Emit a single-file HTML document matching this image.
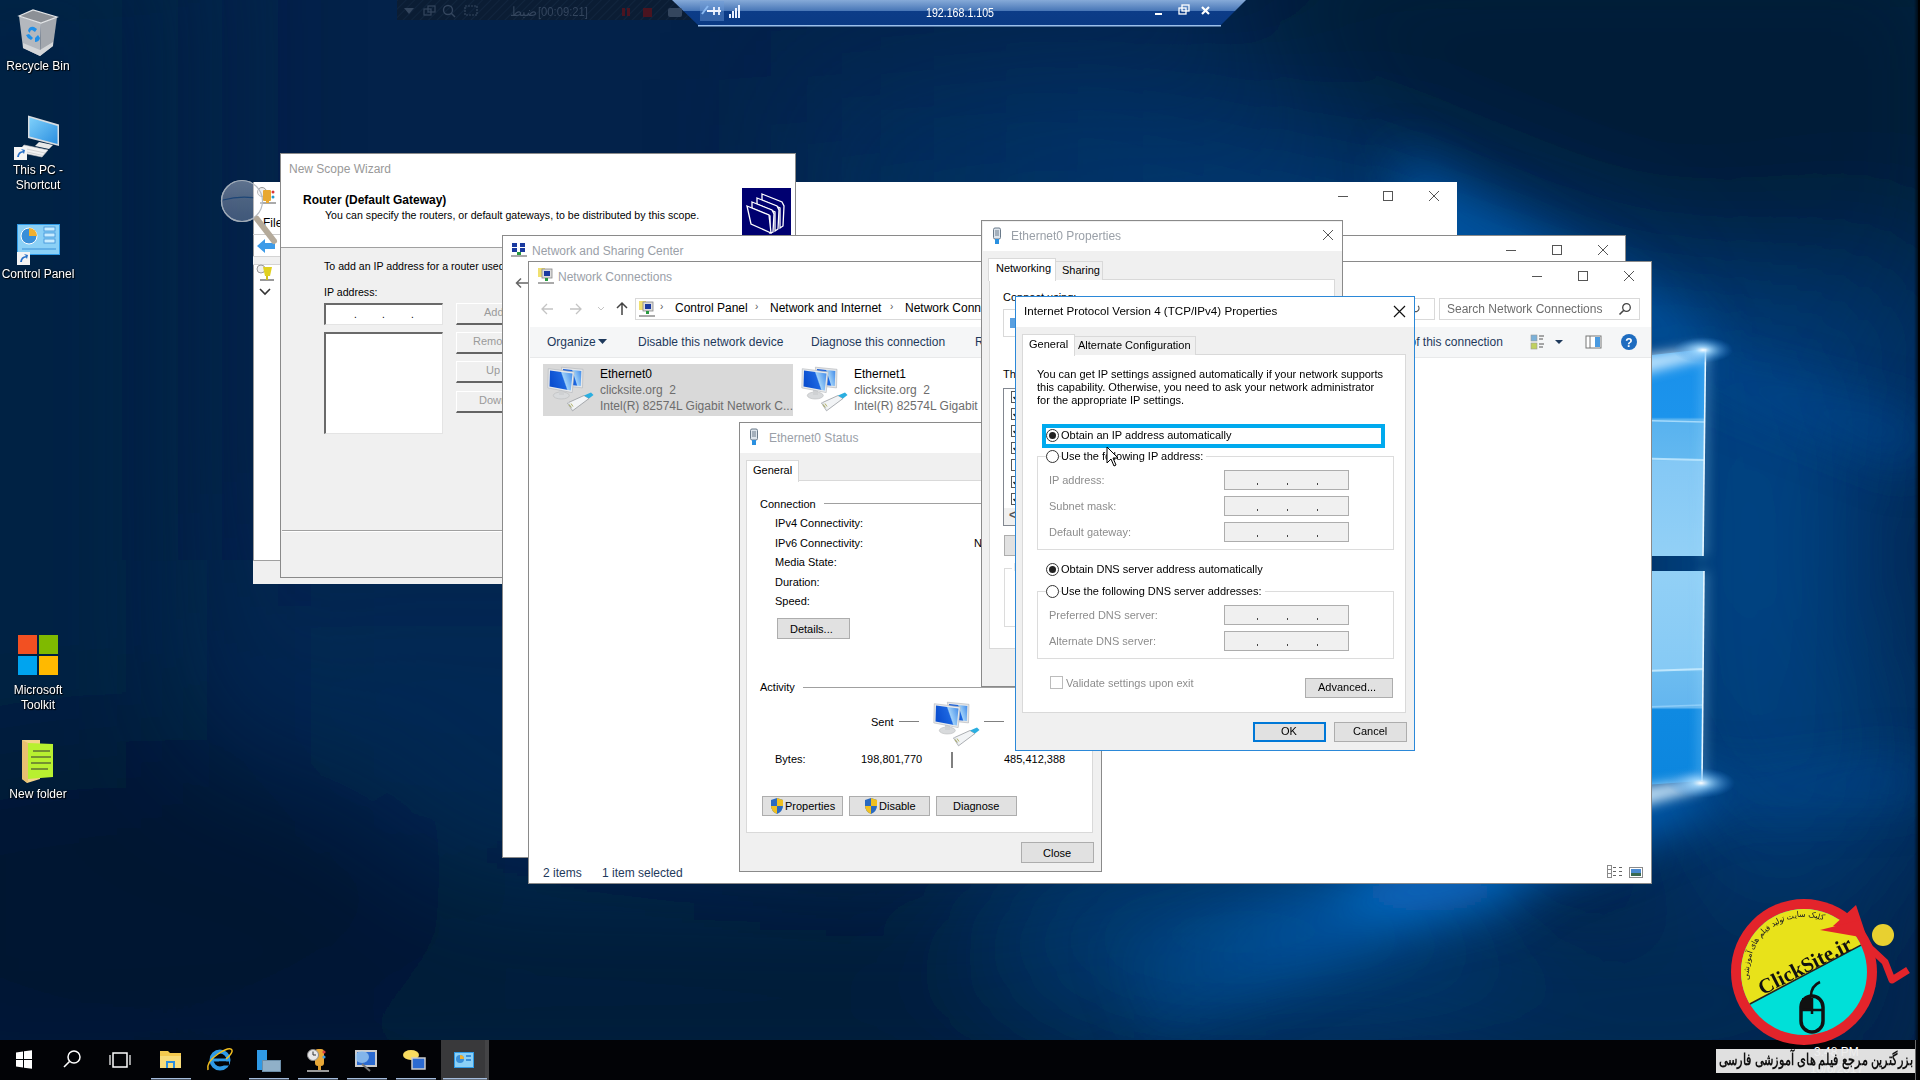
<!DOCTYPE html>
<html><head><meta charset="utf-8">
<style>
*{box-sizing:border-box;margin:0;padding:0}
html,body{width:1920px;height:1080px;overflow:hidden}
body{position:relative;font-family:"Liberation Sans",sans-serif;font-size:12px;color:#000;background:#082448}
.a{position:absolute}
.t{position:absolute;white-space:nowrap;line-height:1}
#wall{position:absolute;left:0;top:0;width:1920px;height:1040px;
background:
 radial-gradient(ellipse 260px 500px at 1740px 560px, rgba(14,100,190,.55), rgba(14,100,190,0) 70%),
 linear-gradient(90deg,#0a2447 0%,#0a2a52 40%,#0b3a72 75%,#0a4a8e 88%,#083f7c 100%);}
.lbl{position:absolute;color:#fff;font-size:12px;text-align:center;line-height:15px;text-shadow:0 0 2px #000,1px 1px 1px #000;width:76px}
.win{position:absolute;background:#fff;border:1px solid #7a7a7a}
.gray{background:#f0f0f0}
.tb-ctl{position:absolute;width:10px;height:10px}
.btn{position:absolute;background:#e1e1e1;border:1px solid #adadad;text-align:center;font-size:11px;line-height:20px}
.dis{color:#8a8a8a}
.ipb{left:1224px;width:125px;height:20px;background:#f0f0f0;border:1px solid #adadad}
.ipb::before{content:"";position:absolute;left:32px;top:12px;width:1px;height:2px;background:#444;box-shadow:30px 0 #444,60px 0 #444}
</style></head><body>
<svg class="a" style="left:0;top:0" width="1920" height="1040" viewBox="0 0 1920 1040">
 <defs>
  <filter id="b1" x="-50%" y="-50%" width="200%" height="200%"><feGaussianBlur stdDeviation="70"/></filter>
  <filter id="b2" x="-50%" y="-50%" width="200%" height="200%"><feGaussianBlur stdDeviation="25"/></filter>
  <filter id="b3" x="-50%" y="-50%" width="200%" height="200%"><feGaussianBlur stdDeviation="6"/></filter>
  <linearGradient id="pane1" gradientUnits="userSpaceOnUse" x1="0" y1="349" x2="0" y2="556">
   <stop offset="0" stop-color="#1990ea"/><stop offset="0.33" stop-color="#1c94ec"/>
   <stop offset="0.34" stop-color="#58b2ef"/><stop offset="0.53" stop-color="#62b8f0"/>
   <stop offset="0.54" stop-color="#84c8f5"/><stop offset="1" stop-color="#92d0f6"/>
  </linearGradient>
  <linearGradient id="pane2" gradientUnits="userSpaceOnUse" x1="0" y1="571" x2="0" y2="781">
   <stop offset="0" stop-color="#92d0f6"/><stop offset="0.47" stop-color="#86caf5"/>
   <stop offset="0.48" stop-color="#6cbcf0"/><stop offset="0.65" stop-color="#64b6ef"/>
   <stop offset="0.66" stop-color="#0f8ae2"/><stop offset="1" stop-color="#0c86de"/>
  </linearGradient>
  <linearGradient id="beamA" gradientUnits="userSpaceOnUse" x1="800" y1="0" x2="1706" y2="0"><stop offset="0" stop-color="#04386c" stop-opacity=".4"/><stop offset="1" stop-color="#0050a0" stop-opacity="1"/></linearGradient>
  <linearGradient id="beamB" gradientUnits="userSpaceOnUse" x1="1100" y1="0" x2="1600" y2="0"><stop offset="0" stop-color="#006ac8" stop-opacity=".05"/><stop offset="1" stop-color="#006ac8" stop-opacity="1"/></linearGradient>
  <radialGradient id="glow" cx="0.5" cy="0.5" r="0.5">
   <stop offset="0" stop-color="#ffffff" stop-opacity="1"/><stop offset="0.25" stop-color="#9fd8ff" stop-opacity=".8"/><stop offset="1" stop-color="#2a8ae0" stop-opacity="0"/>
  </radialGradient>
 </defs>
 <rect width="1920" height="1040" fill="#03224a"/>
 <g filter="url(#b1)">
  <rect x="-150" y="-100" width="350" height="1240" fill="#012044"/>
  <polygon points="260,560 760,560 760,830 260,850" fill="#053767" opacity=".35"/>
  <rect x="-100" y="870" width="1300" height="260" fill="#011b3b"/>
  <ellipse cx="120" cy="900" rx="320" ry="160" fill="#001530"/>
  <polygon points="800,80 1100,60 1706,330 1706,400 1300,340 800,300" fill="url(#beamA)"/>
  <ellipse cx="1750" cy="560" rx="120" ry="330" fill="#004486"/>
  <ellipse cx="1850" cy="760" rx="90" ry="140" fill="#003a72"/>
  <polygon points="1150,-100 2000,-100 2000,300 1706,290 1350,160" fill="#011a38"/>
  <ellipse cx="1870" cy="360" rx="110" ry="110" fill="#003a70" opacity=".8"/>
  <ellipse cx="1650" cy="1010" rx="260" ry="90" fill="#012a54"/>
  <ellipse cx="1250" cy="930" rx="260" ry="110" fill="#003c74"/>
 </g>
 <g filter="url(#b2)">
  <polygon points="1400,150 1706,330 1706,370 1400,250" fill="#0064bc" opacity=".65"/>
  <polygon points="1706,360 1920,420 1920,470 1706,385" fill="#0050a0" opacity=".5"/>
  <polygon points="1100,940 1702,770 1702,810 1150,1040" fill="url(#beamB)"/>
  <polygon points="1702,785 1920,760 1920,800 1702,805" fill="#0050a0" opacity=".5"/>
  <ellipse cx="1430" cy="892" rx="90" ry="22" fill="#0a78d8" opacity=".7"/>
 </g>
<polygon points="1500,372 1706,349 1703,556 1500,556" fill="url(#pane1)"/>
 <polygon points="1500,571 1704,571 1702,781 1500,795" fill="url(#pane2)"/>
 <line x1="1500" y1="417" x2="1704" y2="422" stroke="#b8e4ff" stroke-width="1.5" opacity=".8"/>
 <line x1="1500" y1="455" x2="1704" y2="460" stroke="#c8ecff" stroke-width="2" opacity=".8"/>
 <line x1="1500" y1="676" x2="1703" y2="669" stroke="#d0efff" stroke-width="2" opacity=".8"/>
 <line x1="1500" y1="712" x2="1703" y2="705" stroke="#a8dcff" stroke-width="1.5" opacity=".6"/>
 <g filter="url(#b3)">
  <polygon points="1600,362 1706,346 1706,358 1600,385" fill="#d8f0ff" opacity=".85"/>
  <polygon points="1600,793 1702,778 1702,790 1600,818" fill="#d8f0ff" opacity=".85"/>
  <line x1="1706" y1="349" x2="1703" y2="556" stroke="#9fdcff" stroke-width="4" opacity=".7"/>
  <line x1="1704" y1="571" x2="1702" y2="781" stroke="#9fdcff" stroke-width="4" opacity=".7"/>
 </g>
 <line x1="1705.5" y1="349" x2="1703" y2="556" stroke="#e6f6ff" stroke-width="1.6"/>
 <line x1="1704" y1="571" x2="1702" y2="781" stroke="#e6f6ff" stroke-width="1.6"/>
 <ellipse cx="1703" cy="350" rx="30" ry="13" fill="url(#glow)"/>
 <ellipse cx="1701" cy="783" rx="34" ry="15" fill="url(#glow)"/>
</svg>
<!-- desktop icons -->
<svg class="a" style="left:10px;top:5px" width="60" height="55" viewBox="0 0 60 55">
 <polygon points="9,11 31,18 30,51 13,43" fill="#b4b8be"/>
 <polygon points="31,18 47,12 43,41 30,51" fill="#a4a8ae"/>
 <polygon points="9,11 23,5 47,12 31,18" fill="#8c9096"/>
 <polygon points="13,38 30,45 43,37 43,41 30,51 13,43" fill="#d4d6d8"/>
 <path d="M9,11 L23,5 L47,12 L31,18Z" fill="none" stroke="#e4e6e8" stroke-width="1.2"/>
 <g fill="#1f8fe8">
  <path d="M18,26 Q19,21 24,22 L27,24 L25,27 L22,25 Q20,25 20,28Z"/>
  <path d="M19,29 L23,33 L21,35 Q17,33 16,30Z"/>
  <path d="M25,33 L28,30 L30,33 Q29,37 25,37Z"/>
 </g>
</svg>
<div class="lbl" style="left:0;top:59px">Recycle Bin</div>
<svg class="a" style="left:12px;top:114px" width="50" height="48" viewBox="0 0 50 48">
 <defs><linearGradient id="pcs" x1="0" y1="0" x2="1" y2="1"><stop offset="0" stop-color="#7fd0fb"/><stop offset="1" stop-color="#2b8fe0"/></linearGradient></defs>
 <polygon points="16,1.5 47,10.6 47,32 16,24" fill="#d8dce0"/>
 <polygon points="17.5,3.5 45.5,12 45.5,30 17.5,22.5" fill="url(#pcs)"/>
 <polygon points="27,28 41,31 37,35 23,32" fill="#e8e8e8"/>
 <polygon points="12,31 36,36 30,43 6,38" fill="#f2f2f2" stroke="#c8c8c8" stroke-width=".6"/>
 <path d="M10,34 L33,39 M8,36.5 L31,41.5" stroke="#c0c0c0" stroke-width=".6"/>
 <rect x="2" y="33" width="13" height="13" fill="#f4f4f4"/>
 <path d="M5,43 Q6,37 11,37 L9,35 L13,36 L12,40 L11,38.5 Q7,39 7,43Z" fill="#2770c8"/>
</svg>
<div class="lbl" style="left:0;top:163px">This PC -<br>Shortcut</div>
<svg class="a" style="left:14px;top:222px" width="48" height="44" viewBox="0 0 48 44">
 <rect x="3" y="2" width="43" height="31" fill="#2f9ae6"/>
 <rect x="4" y="3" width="41" height="29" fill="#8bd0f6"/>
 <circle cx="15" cy="14" r="8" fill="#3a8fd8" stroke="#fff" stroke-width="1"/>
 <path d="M15,14 L15,6 A8,8 0 0 1 23,14Z" fill="#f0b030"/>
 <rect x="30" y="5" width="11" height="4" fill="#c8ecff" stroke="#3a8fd8" stroke-width=".8"/>
 <rect x="30" y="11" width="11" height="4" fill="#c8ecff" stroke="#3a8fd8" stroke-width=".8"/>
 <rect x="30" y="17" width="11" height="4" fill="#c8ecff" stroke="#3a8fd8" stroke-width=".8"/>
 <line x1="8" y1="27" x2="42" y2="27" stroke="#3a8fd8" stroke-width="1.2"/>
 <rect x="3" y="30" width="13" height="13" fill="#f4f4f4"/>
 <path d="M6,40 Q7,34 12,34 L10,32 L14,33 L13,37 L12,35.5 Q8,36 8,40Z" fill="#2770c8"/>
</svg>
<div class="lbl" style="left:0;top:267px">Control Panel</div>
<svg class="a" style="left:17px;top:634px" width="42" height="42" viewBox="0 0 42 42">
 <rect x="1" y="1" width="19" height="19" fill="#f25022"/>
 <rect x="22" y="1" width="19" height="19" fill="#7fba00"/>
 <rect x="1" y="22" width="19" height="19" fill="#00a4ef"/>
 <rect x="22" y="22" width="19" height="19" fill="#ffb900"/>
</svg>
<div class="lbl" style="left:0;top:683px">Microsoft<br>Toolkit</div>
<svg class="a" style="left:20px;top:739px" width="36" height="44" viewBox="0 0 36 44">
 <polygon points="2,1 20,1 20,40 7,44 2,40" fill="#f3d48a"/>
 <polygon points="8,4 33,5 33,38 8,40" fill="#b8f030"/>
 <polygon points="2,1 8,4 8,44 2,40" fill="#e8c070"/>
 <line x1="13" y1="12" x2="30" y2="12" stroke="#333" stroke-width="1"/>
 <line x1="11" y1="18" x2="31" y2="18" stroke="#333" stroke-width="1"/>
 <line x1="11" y1="24" x2="31" y2="24" stroke="#333" stroke-width="1"/>
 <line x1="11" y1="30" x2="28" y2="30" stroke="#333" stroke-width="1"/>
</svg>
<div class="lbl" style="left:0;top:787px">New folder</div>


<!-- ===== DHCP console (back) ===== -->
<div class="a" style="left:253px;top:182px;width:1204px;height:402px;background:#fff;border-left:1px solid #9a9a9a"></div>
<div class="a" style="left:253px;top:560px;width:250px;height:24px;background:#f0f0f0;border-top:1px solid #a0a0a0"></div>
<svg class="a" style="left:256px;top:186px" width="24" height="20" viewBox="0 0 24 20">
 <circle cx="6" cy="6" r="4.5" fill="#eee" stroke="#999"/>
 <rect x="7" y="4" width="8" height="11" rx="1" fill="#e8a830"/>
 <circle cx="17" cy="6" r="1.5" fill="#d33"/><circle cx="17" cy="11" r="1.5" fill="#29c"/>
 <rect x="4" y="16" width="16" height="2" fill="#aaa"/><rect x="10" y="14" width="3" height="3" fill="#e8a830"/>
</svg>
<div class="t" style="left:263px;top:217px;font-size:12px">File</div>
<div class="a" style="left:253px;top:234px;width:28px;height:1px;background:#ccc"></div>
<svg class="a" style="left:256px;top:238px" width="22" height="16" viewBox="0 0 22 16">
 <path d="M1,8 L9,1 L9,5 L19,5 L19,11 L9,11 L9,15Z" fill="#3d9be8"/>
</svg>
<div class="a" style="left:253px;top:256px;width:28px;height:9px;background:#f0f0f0;border-top:1px solid #d4d4d4;border-bottom:1px solid #d4d4d4"></div>
<svg class="a" style="left:256px;top:264px" width="22" height="20" viewBox="0 0 22 20">
 <circle cx="5" cy="5" r="4" fill="#eee" stroke="#999"/>
 <path d="M7,3 L16,3 L14,12 L9,12Z" fill="#e0d020"/>
 <rect x="4" y="15" width="14" height="2" fill="#999"/><rect x="10" y="12" width="2" height="4" fill="#d0c020"/>
</svg>
<svg class="a" style="left:259px;top:288px" width="12" height="8" viewBox="0 0 12 8"><path d="M1,1 L6,6 L11,1" fill="none" stroke="#333" stroke-width="1.6"/></svg>
<!-- dhcp title controls -->
<div class="a" style="left:1338px;top:196px;width:10px;height:1px;background:#555"></div>
<div class="a" style="left:1383px;top:191px;width:10px;height:10px;border:1px solid #555"></div>
<svg class="a" style="left:1428px;top:190px" width="12" height="12" viewBox="0 0 12 12"><path d="M1,1 L11,11 M11,1 L1,11" stroke="#555" stroke-width="1"/></svg>

<!-- ===== New Scope Wizard ===== -->
<div class="a" style="left:280px;top:153px;width:516px;height:425px;background:#f0f0f0;border:1px solid #8a8a8a"></div>
<div class="a" style="left:281px;top:154px;width:514px;height:94px;background:#fff;border-bottom:1px solid #a0a0a0"></div>
<div class="t" style="left:289px;top:163px;font-size:12px;color:#999">New Scope Wizard</div>
<div class="t" style="left:303px;top:194px;font-size:12px;font-weight:bold;color:#000">Router (Default Gateway)</div>
<div class="t" style="left:325px;top:210px;font-size:10.6px;color:#000">You can specify the routers, or default gateways, to be distributed by this scope.</div>
<svg class="a" style="left:742px;top:188px" width="49" height="48" viewBox="0 0 49 48">
 <rect width="49" height="48" fill="#000070"/>
 <g fill="#000070" stroke="#fff" stroke-width="1.3">
  <path d="M20,6 L40,14 L42,18 L41,38 L38,40 L38,20 L20,12Z"/>
  <path d="M15,10 L35,18 L37,22 L36,41 L33,43 L33,24 L15,16Z"/>
  <path d="M10,14 L30,22 L32,26 L31,44 L28,45 L28,28 L10,20Z"/>
  <path d="M5,18 L27,27 L29,45 L9,36Z"/>
 </g>
</svg>
<div class="a" style="left:282px;top:530px;width:513px;height:1px;background:#a0a0a0"></div>
<div class="a" style="left:282px;top:531px;width:513px;height:1px;background:#fff"></div>
<div class="t" style="left:324px;top:261px;font-size:10.6px">To add an IP address for a router used by clients on the subnet, enter the address below.</div>
<div class="t" style="left:324px;top:287px;font-size:10.6px">IP address:</div>
<div class="a" style="left:324px;top:303px;width:119px;height:22px;background:#fff;border-top:2px solid #6a6a6a;border-left:2px solid #6a6a6a;border-right:1px solid #e4e4e4;border-bottom:1px solid #e4e4e4"></div>
<div class="t" style="left:354px;top:310px;font-size:10px">.</div>
<div class="t" style="left:382px;top:310px;font-size:10px">.</div>
<div class="t" style="left:411px;top:310px;font-size:10px">.</div>
<div class="a" style="left:324px;top:332px;width:119px;height:102px;background:#fff;border-top:2px solid #6a6a6a;border-left:2px solid #6a6a6a;border-right:1px solid #e4e4e4;border-bottom:1px solid #e4e4e4"></div>
<div class="a" style="left:456px;top:303px;width:60px;height:22px;border-top:1px solid #fff;border-left:1px solid #fff;border-bottom:2px solid #646464"></div>
<div class="t dis" style="left:484px;top:307px;font-size:11px;color:#9a9a9a">Add</div>
<div class="a" style="left:456px;top:332px;width:60px;height:22px;border-top:1px solid #fff;border-left:1px solid #fff;border-bottom:2px solid #646464"></div>
<div class="t" style="left:473px;top:336px;font-size:11px;color:#9a9a9a">Remove</div>
<div class="a" style="left:456px;top:361px;width:60px;height:22px;border-top:1px solid #fff;border-left:1px solid #fff;border-bottom:2px solid #646464"></div>
<div class="t" style="left:486px;top:365px;font-size:11px;color:#9a9a9a">Up</div>
<div class="a" style="left:456px;top:391px;width:60px;height:22px;border-top:1px solid #fff;border-left:1px solid #fff;border-bottom:2px solid #646464"></div>
<div class="t" style="left:479px;top:395px;font-size:11px;color:#9a9a9a">Down</div>
<!-- magnifier cursor -->
<svg class="a" style="left:215px;top:175px;mix-blend-mode:screen" width="70" height="75" viewBox="0 0 70 75">
 <defs><linearGradient id="mg" x1="0" y1="0" x2="0" y2="1"><stop offset="0" stop-color="#5e5e62"/><stop offset=".5" stop-color="#4a4a4e"/><stop offset="1" stop-color="#3e3e44"/></linearGradient></defs>
 <circle cx="27" cy="26" r="20.5" fill="url(#mg)" stroke="#9aa4b0" stroke-width="1.2"/>
 <path d="M8,25 Q27,20 46,24" fill="none" stroke="#1a2a40" stroke-width="1.2"/>
</svg>
<svg class="a" style="left:215px;top:175px" width="70" height="75" viewBox="0 0 70 75">
 <circle cx="27" cy="26" r="20.5" fill="none" stroke="#a4aab2" stroke-width="1.2" opacity=".8"/>
 <line x1="42" y1="44" x2="59" y2="66" stroke="#b4aa9a" stroke-width="6" stroke-linecap="round"/>
</svg>


<!-- ===== Network and Sharing Center ===== -->
<div class="a" style="left:502px;top:235px;width:1124px;height:623px;background:#fff;border:1px solid #8a8a8a"></div>
<svg class="a" style="left:511px;top:242px" width="16" height="16" viewBox="0 0 16 16">
 <rect x="1" y="1" width="5" height="4" fill="#1a3aa0"/><rect x="9" y="1" width="5" height="4" fill="#1a3aa0"/>
 <rect x="1" y="6" width="5" height="4" fill="#1a3aa0"/><rect x="9" y="6" width="5" height="4" fill="#1a3aa0"/>
 <rect x="6" y="10" width="4" height="3" fill="#2a9a40"/><rect x="0" y="13" width="16" height="2" fill="#aaa"/>
</svg>
<div class="t" style="left:532px;top:245px;font-size:12px;color:#9aa0a8">Network and Sharing Center</div>
<svg class="a" style="left:515px;top:277px" width="14" height="12" viewBox="0 0 14 12"><path d="M13,6 L2,6 M6,1.5 L1.5,6 L6,10.5" fill="none" stroke="#666" stroke-width="1.5"/></svg>
<div class="a" style="left:1506px;top:250px;width:10px;height:1px;background:#555"></div>
<div class="a" style="left:1552px;top:245px;width:10px;height:10px;border:1px solid #555"></div>
<svg class="a" style="left:1597px;top:244px" width="12" height="12" viewBox="0 0 12 12"><path d="M1,1 L11,11 M11,1 L1,11" stroke="#555" stroke-width="1"/></svg>

<!-- ===== Network Connections ===== -->
<div class="a" style="left:528px;top:261px;width:1124px;height:623px;background:#fff;border:1px solid #8a8a8a"></div>
<svg class="a" style="left:537px;top:267px" width="18" height="18" viewBox="0 0 18 18">
 <rect x="1" y="1" width="7" height="9" fill="#f0e070"/>
 <rect x="5" y="2" width="10" height="9" fill="#ddd" stroke="#888" stroke-width=".8"/>
 <rect x="7" y="4" width="6" height="5" fill="#1a3aa0"/>
 <rect x="8" y="11" width="3" height="3" fill="#2a9a40"/><rect x="1" y="15" width="16" height="2" fill="#aaa"/>
</svg>
<div class="t" style="left:558px;top:271px;font-size:12px;color:#9aa0a8">Network Connections</div>
<div class="a" style="left:1532px;top:276px;width:10px;height:1px;background:#555"></div>
<div class="a" style="left:1578px;top:271px;width:10px;height:10px;border:1px solid #555"></div>
<svg class="a" style="left:1623px;top:270px" width="12" height="12" viewBox="0 0 12 12"><path d="M1,1 L11,11 M11,1 L1,11" stroke="#555" stroke-width="1"/></svg>
<!-- nav -->
<svg class="a" style="left:540px;top:300px" width="95" height="18" viewBox="0 0 95 18">
 <path d="M13,9 L2,9 M7,4 L2,9 L7,14" fill="none" stroke="#c4c4c4" stroke-width="1.3"/>
 <path d="M30,9 L41,9 M36,4 L41,9 L36,14" fill="none" stroke="#c4c4c4" stroke-width="1.3"/>
 <path d="M58,7 L61,10 L64,7" fill="none" stroke="#c4c4c4" stroke-width="1"/>
 <path d="M82,15 L82,3 M77,8 L82,3 L87,8" fill="none" stroke="#444" stroke-width="1.5"/>
</svg>
<div class="a" style="left:635px;top:298px;width:800px;height:22px;border:1px solid #d9d9d9;background:#fff"></div>
<svg class="a" style="left:638px;top:300px" width="18" height="18" viewBox="0 0 18 18">
 <rect x="1" y="1" width="7" height="9" fill="#f0e070"/>
 <rect x="5" y="2" width="10" height="9" fill="#ddd" stroke="#888" stroke-width=".8"/>
 <rect x="7" y="4" width="6" height="5" fill="#1a3aa0"/>
 <rect x="8" y="11" width="3" height="3" fill="#2a9a40"/><rect x="1" y="15" width="16" height="2" fill="#aaa"/>
</svg>
<div class="t" style="left:660px;top:302px;font-size:10px;color:#555">›</div>
<div class="t" style="left:675px;top:302px;font-size:12px">Control Panel</div>
<div class="t" style="left:755px;top:302px;font-size:10px;color:#555">›</div>
<div class="t" style="left:770px;top:302px;font-size:12px">Network and Internet</div>
<div class="t" style="left:890px;top:302px;font-size:10px;color:#555">›</div>
<div class="t" style="left:905px;top:302px;font-size:12px">Network Connections</div>
<div class="a" style="left:1406px;top:298px;width:29px;height:22px;border:1px solid #d9d9d9;background:#fff"></div>
<div class="t" style="left:1410px;top:302px;font-size:13px;color:#555">↻</div>
<div class="a" style="left:1439px;top:298px;width:201px;height:22px;border:1px solid #d9d9d9;background:#fff"></div>
<div class="t" style="left:1447px;top:303px;font-size:12px;color:#6d6d6d">Search Network Connections</div>
<svg class="a" style="left:1618px;top:302px" width="14" height="14" viewBox="0 0 14 14"><circle cx="8.5" cy="5.5" r="3.8" fill="none" stroke="#444" stroke-width="1.3"/><line x1="5.8" y1="8.2" x2="1.5" y2="12.5" stroke="#444" stroke-width="1.6"/></svg>
<!-- toolbar -->
<div class="a" style="left:530px;top:327px;width:1121px;height:31px;background:#f5f6f7;border-bottom:1px solid #e8e9ea"></div>
<div class="t" style="left:547px;top:336px;font-size:12px;color:#1e395b">Organize</div>
<svg class="a" style="left:598px;top:339px" width="9" height="6" viewBox="0 0 9 6"><path d="M0,0 L9,0 L4.5,5Z" fill="#1e395b"/></svg>
<div class="t" style="left:638px;top:336px;font-size:12px;color:#1e395b">Disable this network device</div>
<div class="t" style="left:811px;top:336px;font-size:12px;color:#1e395b">Diagnose this connection</div>
<div class="t" style="left:975px;top:336px;font-size:12px;color:#1e395b">Rename this connection</div>
<div class="t" style="left:1345px;top:336px;font-size:12px;color:#1e395b">View status of this connection</div>
<svg class="a" style="left:1530px;top:334px" width="110" height="18" viewBox="0 0 110 18">
 <rect x="1" y="1" width="6" height="6" fill="#7ab0d8" stroke="#999" stroke-width=".6"/>
 <rect x="1" y="9" width="6" height="6" fill="#c0d060" stroke="#999" stroke-width=".6"/>
 <path d="M9,2 L14,2 M9,5 L13,5 M9,10 L14,10 M9,13 L13,13" stroke="#555" stroke-width="1"/>
 <path d="M25,6 L33,6 L29,10Z" fill="#1e395b"/>
 <rect x="56" y="2" width="15" height="12" fill="#fff" stroke="#777" stroke-width="1"/>
 <rect x="65" y="3" width="5" height="10" fill="#4a9ae0"/>
 <line x1="60" y1="2" x2="60" y2="14" stroke="#777"/>
 <circle cx="99" cy="8" r="8" fill="#1e6cc0"/>
 <text x="99" y="12.5" font-family="Liberation Sans" font-weight="bold" font-size="12" fill="#fff" text-anchor="middle">?</text>
</svg>
<!-- items -->
<div class="a" style="left:543px;top:364px;width:250px;height:52px;background:#d9d9d9"></div>
<svg class="a" style="left:545px;top:365px" width="50" height="50" viewBox="0 0 50 50">
 <g id="netico">
 <defs>
  <linearGradient id="scr" x1="0" y1="0.3" x2="1" y2="0"><stop offset="0" stop-color="#0b4fd0"/><stop offset=".5" stop-color="#1c66e0"/><stop offset=".55" stop-color="#9fd0f8"/><stop offset="1" stop-color="#3a86e8"/></linearGradient>
 </defs>
 <polygon points="16.3,2.2 38,4.3 37.5,22.9 20,21" fill="#e4e6e8" stroke="#b0b4b8" stroke-width=".6"/>
 <polygon points="18,4 36.3,6 35.8,21 20,19.5" fill="url(#scr)"/>
 <ellipse cx="16.3" cy="30.5" rx="8" ry="3.5" fill="#d8dadc" stroke="#b8babc" stroke-width=".6"/>
 <rect x="14" y="25" width="5" height="5" fill="#cfd1d3"/>
 <polygon points="3.3,3.7 29.2,6.9 27.2,27.6 2.8,22.9" fill="#e8eaec" stroke="#b0b4b8" stroke-width=".6"/>
 <polygon points="5,5.5 27.5,8.5 25.8,25.5 4.5,21.5" fill="url(#scr)"/>
 <polygon points="22.5,38 39,30.5 44,33.5 27.5,45.8" fill="#f2f4f6" stroke="#8a8e94" stroke-width=".7"/>
 <polygon points="22.5,38 27.5,45.8 27,42 23,36.5" fill="#d0d4d8"/>
 <path d="M24,39.5 L26,42.5 M26,38.5 L28,41.5" stroke="#a0a040" stroke-width=".8"/>
 <polygon points="39,30.5 46,27.5 48.5,30 44,33.5" fill="#2aaee0"/>
</g>
</svg>
<div class="t" style="left:600px;top:368px;font-size:12px;color:#000">Ethernet0</div>
<div class="t" style="left:600px;top:384px;font-size:12px;color:#6d6d6d;white-space:pre">clicksite.org  2</div>
<div class="t" style="left:600px;top:400px;font-size:12px;color:#6d6d6d">Intel(R) 82574L Gigabit Network C...</div>
<svg class="a" style="left:799px;top:365px" width="50" height="50" viewBox="0 0 50 50"><use href="#netico"/></svg>
<div class="t" style="left:854px;top:368px;font-size:12px;color:#000">Ethernet1</div>
<div class="t" style="left:854px;top:384px;font-size:12px;color:#6d6d6d;white-space:pre">clicksite.org  2</div>
<div class="t" style="left:854px;top:400px;font-size:12px;color:#6d6d6d">Intel(R) 82574L Gigabit Network C...</div>
<!-- status bar -->
<div class="t" style="left:543px;top:867px;font-size:12px;color:#1e395b">2 items</div>
<div class="t" style="left:602px;top:867px;font-size:12px;color:#1e395b">1 item selected</div>
<svg class="a" style="left:1606px;top:864px" width="40" height="16" viewBox="0 0 40 16">
 <rect x="1.5" y="1.5" width="4" height="12" fill="#fff" stroke="#8a8a8a" stroke-width="1"/>
 <path d="M1.5,5.5 L5.5,5.5 M1.5,9.5 L5.5,9.5" stroke="#8a8a8a" stroke-width="1"/>
 <path d="M7,3.5 L10,3.5 M13,3.5 L16,3.5 M7,7.5 L10,7.5 M13,7.5 L16,7.5 M7,11.5 L10,11.5 M13,11.5 L16,11.5" stroke="#666" stroke-width="1"/>
 <rect x="23.5" y="3.5" width="13" height="10" fill="#fff" stroke="#8a8a8a" stroke-width="1"/>
 <rect x="25" y="5" width="10" height="7" fill="#4a8ad0"/>
 <rect x="25" y="9" width="10" height="3" fill="#3a6a50"/>
</svg>


<!-- ===== Ethernet0 Status ===== -->
<div class="a" style="left:739px;top:422px;width:363px;height:450px;background:#f0f0f0;border:1px solid #8a8a8a"></div>
<div class="a" style="left:740px;top:423px;width:361px;height:30px;background:#fff"></div>
<svg class="a" style="left:749px;top:428px" width="10" height="18" viewBox="0 0 10 18">
 <rect x="1.5" y="1" width="7" height="11" rx="1.5" fill="#dde4ec" stroke="#6a7a8a" stroke-width="1"/>
 <line x1="4" y1="3" x2="4" y2="9" stroke="#6a7a8a"/><line x1="6" y1="3" x2="6" y2="9" stroke="#6a7a8a"/>
 <rect x="3" y="12" width="4" height="5" fill="#2a90e0"/>
</svg>
<div class="t" style="left:769px;top:432px;font-size:12px;color:#9aa0a8">Ethernet0 Status</div>
<div class="a" style="left:746px;top:480px;width:347px;height:353px;background:#fff;border:1px solid #d9d9d9"></div>
<div class="a" style="left:746px;top:460px;width:53px;height:22px;background:#fff;border:1px solid #d9d9d9;border-bottom:none"></div>
<div class="t" style="left:753px;top:465px;font-size:11px">General</div>
<div class="t" style="left:760px;top:499px;font-size:11px">Connection</div>
<div class="a" style="left:824px;top:503px;width:260px;height:1px;background:#a0a0a0"></div>
<div class="t" style="left:775px;top:518px;font-size:11px">IPv4 Connectivity:</div>
<div class="t" style="left:775px;top:538px;font-size:11px">IPv6 Connectivity:</div>
<div class="t" style="left:974px;top:538px;font-size:11px">No network access</div>
<div class="t" style="left:775px;top:557px;font-size:11px">Media State:</div>
<div class="t" style="left:775px;top:577px;font-size:11px">Duration:</div>
<div class="t" style="left:775px;top:596px;font-size:11px">Speed:</div>
<div class="a" style="left:777px;top:618px;width:73px;height:21px;background:#e1e1e1;border:1px solid #adadad"></div>
<div class="t" style="left:790px;top:624px;font-size:11px">Details...</div>
<div class="t" style="left:760px;top:682px;font-size:11px">Activity</div>
<div class="a" style="left:803px;top:687px;width:281px;height:1px;background:#a0a0a0"></div>
<div class="t" style="left:871px;top:717px;font-size:11px">Sent</div>
<div class="a" style="left:899px;top:721px;width:20px;height:1px;background:#808080"></div>
<div class="a" style="left:984px;top:721px;width:20px;height:1px;background:#808080"></div>
<svg class="a" style="left:930px;top:700px" width="52" height="50" viewBox="0 0 50 50"><use href="#netico"/></svg>
<div class="t" style="left:775px;top:754px;font-size:11px">Bytes:</div>
<div class="t" style="left:861px;top:754px;font-size:11px">198,801,770</div>
<div class="a" style="left:951px;top:752px;width:2px;height:16px;background:#808080"></div>
<div class="t" style="left:1004px;top:754px;font-size:11px">485,412,388</div>
<div class="a" style="left:762px;top:796px;width:81px;height:20px;background:#e1e1e1;border:1px solid #adadad"></div>
<div class="a" style="left:849px;top:796px;width:81px;height:20px;background:#e1e1e1;border:1px solid #adadad"></div>
<div class="a" style="left:936px;top:796px;width:81px;height:20px;background:#e1e1e1;border:1px solid #adadad"></div>
<svg class="a" style="left:769px;top:797px" width="16" height="18" viewBox="0 0 16 18"><path d="M8,1 L14,3 L14,9 Q14,14 8,17 Q2,14 2,9 L2,3Z" fill="#2a6ac0"/><path d="M8,1 L14,3 L14,9 L8,9Z" fill="#f0c020"/><path d="M2,9 L8,9 L8,17 Q2,14 2,9Z" fill="#f0c020"/></svg>
<svg class="a" style="left:863px;top:797px" width="16" height="18" viewBox="0 0 16 18"><path d="M8,1 L14,3 L14,9 Q14,14 8,17 Q2,14 2,9 L2,3Z" fill="#2a6ac0"/><path d="M8,1 L14,3 L14,9 L8,9Z" fill="#f0c020"/><path d="M2,9 L8,9 L8,17 Q2,14 2,9Z" fill="#f0c020"/></svg>
<div class="t" style="left:785px;top:801px;font-size:11px">Properties</div>
<div class="t" style="left:879px;top:801px;font-size:11px">Disable</div>
<div class="t" style="left:953px;top:801px;font-size:11px">Diagnose</div>
<div class="a" style="left:1021px;top:842px;width:73px;height:21px;background:#e1e1e1;border:1px solid #adadad"></div>
<div class="t" style="left:1043px;top:848px;font-size:11px">Close</div>

<!-- ===== Ethernet0 Properties ===== -->
<div class="a" style="left:981px;top:220px;width:362px;height:467px;background:#f0f0f0;border:1px solid #8a8a8a"></div>
<div class="a" style="left:983px;top:222px;width:359px;height:29px;background:#fff"></div>
<svg class="a" style="left:992px;top:227px" width="10" height="18" viewBox="0 0 10 18">
 <rect x="1.5" y="1" width="7" height="11" rx="1.5" fill="#dde4ec" stroke="#6a7a8a" stroke-width="1"/>
 <line x1="4" y1="3" x2="4" y2="9" stroke="#6a7a8a"/><line x1="6" y1="3" x2="6" y2="9" stroke="#6a7a8a"/>
 <rect x="3" y="12" width="4" height="5" fill="#2a90e0"/>
</svg>
<div class="t" style="left:1011px;top:230px;font-size:12px;color:#9aa0a8">Ethernet0 Properties</div>
<svg class="a" style="left:1322px;top:229px" width="12" height="12" viewBox="0 0 12 12"><path d="M1,1 L11,11 M11,1 L1,11" stroke="#555" stroke-width="1"/></svg>
<div class="a" style="left:989px;top:279px;width:346px;height:370px;background:#fff;border:1px solid #d9d9d9"></div>
<div class="a" style="left:988px;top:258px;width:68px;height:23px;background:#fff;border:1px solid #d9d9d9;border-bottom:none"></div>
<div class="t" style="left:996px;top:263px;font-size:11px">Networking</div>
<div class="a" style="left:1056px;top:261px;width:47px;height:19px;background:#f0f0f0;border:1px solid #d9d9d9;border-bottom:none;border-left:none"></div>
<div class="t" style="left:1062px;top:265px;font-size:11px">Sharing</div>
<div class="t" style="left:1003px;top:292px;font-size:11px">Connect using:</div>
<div class="a" style="left:1003px;top:309px;width:320px;height:28px;background:#fff;border:1px solid #d9d9d9"></div>
<div class="a" style="left:1010px;top:318px;width:8px;height:10px;background:#5aa0e0"></div>
<div class="t" style="left:1003px;top:369px;font-size:11px">This connection uses the following items:</div>
<div class="a" style="left:1003px;top:388px;width:320px;height:138px;background:#fff;border:1px solid #828790"></div>
<svg class="a" style="left:1011px;top:391px" width="12" height="12" viewBox="0 0 12 12"><rect x="0.5" y="0.5" width="11" height="11" fill="#fff" stroke="#555"/><path d="M2.5,6 L5,8.5 L9.5,3" fill="none" stroke="#222" stroke-width="1.6"/></svg>
<svg class="a" style="left:1011px;top:408px" width="12" height="12" viewBox="0 0 12 12"><rect x="0.5" y="0.5" width="11" height="11" fill="#fff" stroke="#555"/><path d="M2.5,6 L5,8.5 L9.5,3" fill="none" stroke="#222" stroke-width="1.6"/></svg>
<svg class="a" style="left:1011px;top:425px" width="12" height="12" viewBox="0 0 12 12"><rect x="0.5" y="0.5" width="11" height="11" fill="#fff" stroke="#555"/><path d="M2.5,6 L5,8.5 L9.5,3" fill="none" stroke="#222" stroke-width="1.6"/></svg>
<svg class="a" style="left:1011px;top:442px" width="12" height="12" viewBox="0 0 12 12"><rect x="0.5" y="0.5" width="11" height="11" fill="#fff" stroke="#555"/><path d="M2.5,6 L5,8.5 L9.5,3" fill="none" stroke="#222" stroke-width="1.6"/></svg>
<div class="a" style="left:1011px;top:459px;width:12px;height:12px;border:1px solid #555;background:#fff"></div>
<svg class="a" style="left:1011px;top:476px" width="12" height="12" viewBox="0 0 12 12"><rect x="0.5" y="0.5" width="11" height="11" fill="#fff" stroke="#555"/><path d="M2.5,6 L5,8.5 L9.5,3" fill="none" stroke="#222" stroke-width="1.6"/></svg>
<svg class="a" style="left:1011px;top:493px" width="12" height="12" viewBox="0 0 12 12"><rect x="0.5" y="0.5" width="11" height="11" fill="#fff" stroke="#555"/><path d="M2.5,6 L5,8.5 L9.5,3" fill="none" stroke="#222" stroke-width="1.6"/></svg>
<div class="a" style="left:1004px;top:508px;width:318px;height:17px;background:#f0f0f0"></div>
<div class="t" style="left:1009px;top:509px;font-size:12px;font-weight:bold;color:#555">&lt;</div>
<div class="a" style="left:1004px;top:535px;width:75px;height:21px;background:#e1e1e1;border:1px solid #adadad"></div>
<div class="a" style="left:1004px;top:568px;width:320px;height:59px;border:1px solid #dcdcdc"></div>
<div class="t" style="left:1012px;top:562px;font-size:11px;background:#fff;padding:0 2px">Description</div>

<!-- ===== IPv4 Properties ===== -->
<div class="a" style="left:1015px;top:296px;width:400px;height:455px;background:#f0f0f0;border:1px solid #2b88d8"></div>
<div class="a" style="left:1016px;top:297px;width:398px;height:30px;background:#fff"></div>
<div class="t" style="left:1024px;top:305px;font-size:11.6px">Internet Protocol Version 4 (TCP/IPv4) Properties</div>
<svg class="a" style="left:1393px;top:305px" width="13" height="13" viewBox="0 0 13 13"><path d="M1,1 L12,12 M12,1 L1,12" stroke="#111" stroke-width="1.2"/></svg>
<div class="a" style="left:1022px;top:354px;width:384px;height:359px;background:#fff;border:1px solid #d9d9d9"></div>
<div class="a" style="left:1022px;top:334px;width:53px;height:22px;background:#fff;border:1px solid #d9d9d9;border-bottom:none"></div>
<div class="t" style="left:1029px;top:339px;font-size:11px">General</div>
<div class="a" style="left:1074px;top:336px;width:122px;height:19px;background:#f0f0f0;border:1px solid #d9d9d9;border-bottom:none"></div>
<div class="t" style="left:1078px;top:340px;font-size:11px">Alternate Configuration</div>
<div class="t" style="left:1037px;top:368px;font-size:11px;line-height:13px">You can get IP settings assigned automatically if your network supports<br>this capability. Otherwise, you need to ask your network administrator<br>for the appropriate IP settings.</div>
<div class="a" style="left:1042px;top:424px;width:343px;height:24px;border:4px solid #00aaee"></div>
<svg class="a" style="left:1045px;top:428px" width="15" height="15" viewBox="0 0 15 15"><circle cx="7.5" cy="7.5" r="6" fill="#fff" stroke="#333" stroke-width="1"/><circle cx="7.5" cy="7.5" r="3.5" fill="#222"/></svg>
<div class="t" style="left:1061px;top:430px;font-size:11px">Obtain an IP address automatically</div>
<div class="a" style="left:1037px;top:456px;width:357px;height:94px;border:1px solid #dcdcdc"></div>
<svg class="a" style="left:1045px;top:449px" width="15" height="15" viewBox="0 0 15 15"><circle cx="7.5" cy="7.5" r="6" fill="#fff" stroke="#333" stroke-width="1"/></svg>
<div class="t" style="left:1061px;top:451px;font-size:11px;background:#fff;padding-right:3px">Use the following IP address:</div>
<div class="t" style="left:1049px;top:475px;font-size:11px;color:#8d8d8d">IP address:</div>
<div class="t" style="left:1049px;top:501px;font-size:11px;color:#8d8d8d">Subnet mask:</div>
<div class="t" style="left:1049px;top:527px;font-size:11px;color:#8d8d8d">Default gateway:</div>
<div class="a ipb" style="top:470px"></div>
<div class="a ipb" style="top:496px"></div>
<div class="a ipb" style="top:522px"></div>
<svg class="a" style="left:1045px;top:562px" width="15" height="15" viewBox="0 0 15 15"><circle cx="7.5" cy="7.5" r="6" fill="#fff" stroke="#333" stroke-width="1"/><circle cx="7.5" cy="7.5" r="3.5" fill="#222"/></svg>
<div class="t" style="left:1061px;top:564px;font-size:11px">Obtain DNS server address automatically</div>
<div class="a" style="left:1037px;top:591px;width:357px;height:68px;border:1px solid #dcdcdc"></div>
<svg class="a" style="left:1045px;top:584px" width="15" height="15" viewBox="0 0 15 15"><circle cx="7.5" cy="7.5" r="6" fill="#fff" stroke="#333" stroke-width="1"/></svg>
<div class="t" style="left:1061px;top:586px;font-size:11px;background:#fff;padding-right:3px">Use the following DNS server addresses:</div>
<div class="t" style="left:1049px;top:610px;font-size:11px;color:#8d8d8d">Preferred DNS server:</div>
<div class="t" style="left:1049px;top:636px;font-size:11px;color:#8d8d8d">Alternate DNS server:</div>
<div class="a ipb" style="top:605px"></div>
<div class="a ipb" style="top:631px"></div>
<div class="a" style="left:1050px;top:676px;width:13px;height:13px;border:1px solid #bcbcbc;background:#fff"></div>
<div class="t" style="left:1066px;top:678px;font-size:11px;color:#8d8d8d">Validate settings upon exit</div>
<div class="a" style="left:1305px;top:678px;width:88px;height:20px;background:#e1e1e1;border:1px solid #adadad"></div>
<div class="t" style="left:1318px;top:682px;font-size:11px">Advanced...</div>
<div class="a" style="left:1253px;top:722px;width:73px;height:20px;background:#e1e1e1;border:2px solid #0078d7"></div>
<div class="t" style="left:1281px;top:726px;font-size:11px">OK</div>
<div class="a" style="left:1334px;top:722px;width:73px;height:20px;background:#e1e1e1;border:1px solid #adadad"></div>
<div class="t" style="left:1353px;top:726px;font-size:11px">Cancel</div>
<!-- mouse cursor -->
<svg class="a" style="left:1106px;top:446px" width="14" height="22" viewBox="0 0 14 22"><path d="M1,1 L1,17 L5,13 L8,20 L10,19 L7,12 L12,12Z" fill="#fff" stroke="#000" stroke-width="1"/></svg>

<!-- taskbar -->
<div class="a" style="left:0;top:1040px;width:1920px;height:40px;background:#020306"></div>
<div class="a" style="left:441px;top:1040px;width:44px;height:40px;background:#39393b"></div><div class="a" style="left:485px;top:1040px;width:4px;height:40px;background:#444446"></div>
<svg class="a" style="left:0;top:1040px" width="520" height="40" viewBox="0 0 520 40">
 <!-- start -->
 <polygon points="16,12.5 23,11.5 23,19 16,19" fill="#fff"/>
 <polygon points="24,11.3 32,10.2 32,19 24,19" fill="#fff"/>
 <polygon points="16,20 23,20 23,27.5 16,26.5" fill="#fff"/>
 <polygon points="24,20 32,20 32,28.8 24,27.7" fill="#fff"/>
 <!-- search -->
 <circle cx="74" cy="17" r="6" fill="none" stroke="#fff" stroke-width="1.5"/>
 <line x1="69.5" y1="21.5" x2="64" y2="27" stroke="#fff" stroke-width="1.6"/>
 <!-- task view -->
 <rect x="113" y="13" width="14" height="14" fill="none" stroke="#fff" stroke-width="1.5"/>
 <line x1="110" y1="15" x2="110" y2="25" stroke="#fff" stroke-width="1.2"/>
 <line x1="130" y1="15" x2="130" y2="25" stroke="#fff" stroke-width="1.2"/>
 <!-- explorer -->
 <path d="M160,11 L168,11 L170,13 L181,13 L181,28 L160,28Z" fill="#f3c94f"/>
 <rect x="160" y="16" width="21" height="12" fill="#f8dc7a"/>
 <rect x="166" y="21" width="9" height="7" fill="#2a8ee0"/>
 <rect x="168" y="23" width="5" height="5" fill="#f8dc7a"/>
 <!-- IE -->
 <circle cx="220" cy="20" r="8.5" fill="none" stroke="#2f9ae6" stroke-width="4"/>
 <rect x="212" y="18.5" width="16" height="3" fill="#2f9ae6"/>
 <rect x="219" y="21.5" width="10" height="4" fill="#020306"/>
 <path d="M208,30 Q206,22 218,14 Q230,6 232,10 Q233,13 226,19" fill="none" stroke="#f4c020" stroke-width="1.5"/>
 <!-- server manager -->
 <rect x="257" y="10" width="10" height="20" fill="#2f9ae6"/>
 <rect x="262" y="20" width="19" height="12" fill="#6c8ea8"/>
 <rect x="263" y="21" width="17" height="10" fill="#90b0c8"/>
 <!-- dhcp -->
 <rect x="315" y="9" width="9" height="17" rx="3" fill="#e8a838"/>
 <circle cx="324" cy="12" r="1.6" fill="#d84040"/><circle cx="324" cy="17" r="1.6" fill="#40a0e0"/>
 <circle cx="313" cy="15" r="5.5" fill="#e8e8ea" stroke="#8a8a8a" stroke-width="1"/>
 <path d="M313,11.5 L313,15 L316,15" stroke="#333" stroke-width="1" fill="none"/>
 <rect x="318" y="25" width="3" height="5" fill="#e0a030"/>
 <rect x="307" y="30" width="22" height="2" fill="#9a9a9a"/>
 <!-- network -->
 <rect x="356" y="11" width="20" height="15" fill="#2b6ad0" stroke="#ccc" stroke-width="2"/>
 <ellipse cx="362" cy="17" rx="7" ry="6" fill="#9ac8f0" opacity=".8"/>
 <line x1="362" y1="24" x2="370" y2="31" stroke="#777" stroke-width="2"/>
 <!-- chat -->
 <ellipse cx="411" cy="15" rx="8" ry="5" fill="#f8dc60"/>
 <rect x="412" y="18" width="13" height="11" fill="#2b6ad0" stroke="#ccc" stroke-width="1.5"/>
 <!-- control panel active -->
 <rect x="454" y="12" width="20" height="16" fill="#2f9ae6"/>
 <rect x="455" y="13" width="18" height="14" fill="#8bd0f6"/>
 <circle cx="460" cy="19" r="4" fill="#3a8fd8"/>
 <path d="M460,19 L460,15 A4,4 0 0 1 464,19Z" fill="#f0b030"/>
 <rect x="466" y="15" width="5" height="2" fill="#3a8fd8"/>
 <rect x="466" y="19" width="5" height="2" fill="#3a8fd8"/>
</svg>
<div class="a" style="left:151px;top:1078px;width:40px;height:1px;background:#a4bcdc;box-shadow:0 1px 0 rgba(164,188,220,.45)"></div>
<div class="a" style="left:249px;top:1078px;width:40px;height:1px;background:#a4bcdc;box-shadow:0 1px 0 rgba(164,188,220,.45)"></div>
<div class="a" style="left:298px;top:1078px;width:40px;height:1px;background:#a4bcdc;box-shadow:0 1px 0 rgba(164,188,220,.45)"></div>
<div class="a" style="left:347px;top:1078px;width:40px;height:1px;background:#a4bcdc;box-shadow:0 1px 0 rgba(164,188,220,.45)"></div>
<div class="a" style="left:396px;top:1078px;width:40px;height:1px;background:#a4bcdc;box-shadow:0 1px 0 rgba(164,188,220,.45)"></div>
<div class="a" style="left:443px;top:1078px;width:44px;height:1px;background:#a4bcdc;box-shadow:0 1px 0 rgba(164,188,220,.45)"></div>


<!-- clock -->
<div class="t" style="left:1814px;top:1046px;font-size:12px;color:#fff">3:48 PM</div>
<div class="t" style="left:1810px;top:1063px;font-size:12px;color:#fff">10/6/2017</div>
<!-- ClickSite logo -->
<svg class="a" style="left:1720px;top:890px" width="200" height="160" viewBox="0 0 200 160">
 <defs><clipPath id="inner"><circle cx="84" cy="82" r="63"/></clipPath></defs>
 <circle cx="84" cy="82" r="73" fill="#e3242b"/>
 <g clip-path="url(#inner)">
  <rect x="0" y="0" width="200" height="160" fill="#00e0d8"/>
  <polygon points="0,0 200,0 200,30 147,52 28,115 0,125" fill="#e8e21a"/>
  <line x1="28" y1="115" x2="147" y2="52" stroke="#222" stroke-width="1.5"/>
 </g>
 <polygon points="113,36 136,15 146,45" fill="#e3242b"/>
 <polygon points="100,40 140,30 146,48" fill="#e3242b"/>
 <circle cx="163" cy="45" r="11" fill="#e8d030"/>
 <path d="M146,52 L150,58 L165,72 L172,90 L188,80" fill="none" stroke="#e3242b" stroke-width="7" stroke-linejoin="round"/>
 <text x="0" y="0" transform="translate(88,82) rotate(-27)" font-family="Liberation Serif" font-weight="bold" font-size="21" fill="#111" text-anchor="middle">ClickSite.ir</text>
 <path id="arc1" d="M30.4,94.4 A55,55 0 0 1 108.1,32.6" fill="none"/><text font-family="Liberation Sans" font-size="8" fill="#222"><textPath href="#arc1" startOffset="50%" text-anchor="middle">کلیک سایت تولید فیلم های آموزشی</textPath></text>
 <g transform="translate(82,100)">
  <path d="M9,6 Q9,-4 18,-8" fill="none" stroke="#111" stroke-width="2.5"/>
  <rect x="-1" y="6" width="22" height="36" rx="11" fill="none" stroke="#111" stroke-width="3.5"/>
  <rect x="0" y="8" width="10" height="12" fill="#111"/>
  <line x1="0" y1="20" x2="20" y2="20" stroke="#111" stroke-width="2.5"/>
  <line x1="10" y1="8" x2="10" y2="24" stroke="#111" stroke-width="2.5"/>
 </g>
</svg>
<div class="a" style="left:1716px;top:1049px;width:200px;height:24px;background:rgba(236,236,236,.95)"></div>
<div class="a" style="left:1915px;top:1040px;width:1px;height:40px;background:#6a6a6a"></div>
<div class="a" style="left:1716px;top:1049px;width:200px;height:24px;overflow:hidden"><div class="t" style="right:3px;top:3px;font-size:15.5px;font-weight:bold;color:#111;direction:rtl;transform:scaleX(.705);transform-origin:right center;font-family:'Liberation Sans',sans-serif">بزرگترین مرجع فیلم های آموزشی فارسی</div></div>

<div class="a" style="left:1914px;top:0;width:4px;height:1040px;background:linear-gradient(90deg,rgba(0,0,0,0),rgba(0,0,0,.6))"></div>
<div class="a" style="left:1918px;top:0;width:2px;height:1080px;background:#000"></div>
<!-- remote desktop bar -->
<svg class="a" style="left:380px;top:0" width="880" height="28" viewBox="0 0 880 28">
 <defs>
  <linearGradient id="rdb" x1="0" y1="0" x2="0" y2="1">
   <stop offset="0" stop-color="#86aad8"/><stop offset="0.42" stop-color="#4a78b8"/><stop offset="0.46" stop-color="#0c3c88"/><stop offset="1" stop-color="#0a3a84"/>
  </linearGradient>
  <pattern id="hatch" width="6" height="6" patternUnits="userSpaceOnUse" patternTransform="rotate(45)"><rect width="6" height="6" fill="#0d1c30"/><rect width="1" height="6" fill="#14263c"/></pattern>
 </defs>
 <rect x="17" y="0" width="300" height="20" fill="url(#hatch)" opacity=".85"/>
 <polygon points="292,0 866,0 841,25 318,25" fill="url(#rdb)"/>
 <rect x="318" y="25" width="523" height="1.5" fill="#9cc0ec"/>
 <rect x="320" y="1" width="24" height="20" fill="#6a98d8" opacity=".45"/>
 <polygon points="24,8 34,8 29,14" fill="#34465e"/>
 <rect x="44" y="9" width="7" height="6" fill="none" stroke="#34465e" stroke-width="1.2"/><rect x="48" y="6" width="7" height="6" fill="none" stroke="#34465e" stroke-width="1.2"/>
 <circle cx="68" cy="10" r="4.5" fill="none" stroke="#34465e" stroke-width="1.4"/><line x1="71" y1="13" x2="75" y2="17" stroke="#34465e" stroke-width="1.5"/>
 <rect x="85" y="6" width="12" height="9" fill="none" stroke="#34465e" stroke-width="1.2" stroke-dasharray="2 1"/>
 <text x="130" y="16" font-family="Liberation Sans" font-size="12.5" fill="#34465e">ضبط</text>
 <text x="158" y="16" font-family="Liberation Sans" font-size="12.5" fill="#34465e" textLength="50" lengthAdjust="spacingAndGlyphs">[00:09:21]</text>
 <rect x="242" y="8" width="3" height="8" fill="#4a1420"/><rect x="247" y="8" width="3" height="8" fill="#4a1420"/>
 <rect x="263" y="8" width="9" height="9" fill="#4a1420"/>
 <rect x="288" y="8" width="14" height="9" rx="2" fill="#34465e"/>
 <path d="M327,11 L341,11 M339,7 L339,15 M334,7 L334,15" stroke="#f0f4ff" stroke-width="1.8" fill="none"/>
 <path d="M322,14 L328,6" stroke="#8ab8f0" stroke-width="2"/>
 <rect x="349" y="14" width="2" height="4" fill="#e8f0ff"/><rect x="352" y="11" width="2" height="7" fill="#e8f0ff"/><rect x="355" y="8" width="2" height="10" fill="#e8f0ff"/><rect x="358" y="5" width="2" height="13" fill="#e8f0ff"/>
 <text x="546" y="16.5" font-family="Liberation Sans" font-size="12.5" fill="#fff" textLength="68" lengthAdjust="spacingAndGlyphs">192.168.1.105</text>
 <rect x="775" y="13" width="7" height="2" fill="#fff"/>
 <rect x="799" y="8" width="7" height="6" fill="none" stroke="#fff" stroke-width="1.3"/>
 <rect x="802" y="5" width="7" height="6" fill="none" stroke="#fff" stroke-width="1.3"/>
 <path d="M822,7 L829,14 M829,7 L822,14" stroke="#fff" stroke-width="2.2"/>
</svg>
</body></html>
